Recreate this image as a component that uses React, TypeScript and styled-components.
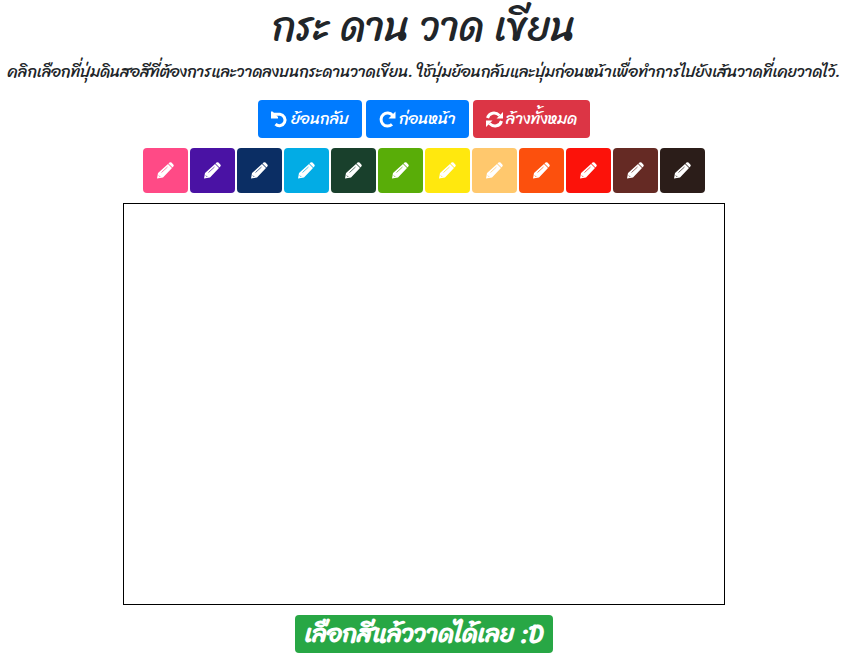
import React from 'react';
import styled, { createGlobalStyle } from 'styled-components';

const GlobalStyle = createGlobalStyle`
  *, *::before, *::after { box-sizing: border-box; }
  body {
    margin: 0;
    background: #fff;
    color: #212529;
    font-family: Sriracha, Itim, Roboto, "Open Sans", "Noto Sans", "DejaVu Sans", sans-serif;
    font-size: 16px;
    line-height: 24px;
  }
`;
const Page = styled.main`
  display: flex;
  flex-direction: column;
  align-items: center;
  padding: 3px 0 0 4px;
`;
const Title = styled.h1`
  margin: 0 0 5px;
  font-size: 40px;
  line-height: 48px;
  font-weight: 400;
`;
const Intro = styled.p`
  margin: 4px 0 16px;
  font-size: 16px;
  text-align: center;
`;
const Toolbar = styled.div`
  display: flex;
  flex-wrap: wrap;
  justify-content: center;
  gap: 4px;
`;
const Action = styled.button<{ $color: string }>`
  display: flex;
  align-items: center;
  gap: 3px;
  height: 38px;
  padding: 0 13px;
  border: 0;
  border-radius: 4px;
  background: ${p => p.$color};
  color: #fff;
  font: inherit;
`;
const Palette = styled.div`
  display: flex;
  flex-wrap: wrap;
  justify-content: center;
  gap: 2px;
  margin: 10px 0;
`;
const Swatch = styled.button<{ $color: string }>`
  display: grid;
  place-items: center;
  width: 45px;
  height: 45px;
  padding: 0;
  border: 0;
  border-radius: 4px;
  background: ${p => p.$color};
  color: #fff;
`;
const Board = styled.canvas`
  border: 1px solid #000;
`;
const Status = styled.strong`
  margin-top: 10px;
  padding: 0 10px;
  border-radius: 4px;
  background: #28a745;
  color: #fff;
  font-size: 25px;
  line-height: 38px;
`;
const Glyph = styled.svg`
  display: block;
  width: 17px;
  height: 17px;
  fill: none;
  stroke: currentColor;
  stroke-width: 3;
`;
const PencilLine = styled.path<{ $color: string }>`
  stroke: ${p => p.$color};
  stroke-width: 0.7;
`;

const UndoIcon = () => (
  <Glyph viewBox="0 0 17 17" aria-hidden="true">
    <path d="M2 3.300H9A5.700 5.700 0 1 1 4.500 13.200" />
    <path d="M0 .5H1.500L7 6V7.500H0Z" fill="currentColor" stroke="none" />
  </Glyph>
);
const RedoIcon = () => (
  <Glyph viewBox="0 0 17 17" aria-hidden="true">
    <path d="M13.500 4.300A6.500 6.500 0 1 0 13 13.300" />
    <path d="M16.500 .5V7.500H9.500Z" fill="currentColor" stroke="none" />
  </Glyph>
);
const RefreshIcon = () => (
  <Glyph viewBox="0 0 17 17" aria-hidden="true">
    <path d="M1.500 7C3 1.500 9.500 .5 13.500 4.500M15.500 10C14 15.500 7.500 16.500 3.500 12.500" />
    <path d="M17 1V7.500H10.500ZM0 16V9.500H6.500Z" fill="currentColor" stroke="none" />
  </Glyph>
);
const PencilIcon = ({ color }: { color: string }) => (
  <Glyph viewBox="0 0 17 17" aria-hidden="true">
    <path
      d="M0 16.500L1 11L11 2L15 6L6 15.500ZM11.500 1.500L12.500.5Q13.500-.2 14.500.6L16.300 2.400Q17.200 3.500 16.300 4.500L15.500 5.500Z"
      fill="currentColor"
      stroke="none"
    />
    <PencilLine $color={color} d="M4.500 10.500L10.500 5M1.800 13.500L3.300 15" />
  </Glyph>
);

const colors = [
  ['ชมพู', '#ff4a86'], ['ม่วง', '#4a12a4'], ['น้ำเงิน', '#0b2e64'], ['ฟ้า', '#02ace5'],
  ['เขียวเข้ม', '#19402c'], ['เขียว', '#59ad08'], ['เหลือง', '#ffe80e'], ['เนื้อ', '#ffc86d'],
  ['ส้ม', '#fc500d'], ['แดง', '#fc120a'], ['น้ำตาล', '#652a24'], ['ดำ', '#2b1d19'],
];

export default function App() {
  return (
    <>
      <GlobalStyle />
      <Page>
        <Title>กระ ดาน วาด เขียน</Title>
        <Intro>คลิกเลือกที่ปุ่มดินสอสีที่ต้องการและวาดลงบนกระดานวาดเขียน. ใช้ปุ่มย้อนกลับและปุ่มก่อนหน้าเพื่อทำการไปยังเส้นวาดที่เคยวาดไว้.</Intro>
        <Toolbar>
          <Action type="button" $color="#007bff"><UndoIcon />ย้อนกลับ</Action>
          <Action type="button" $color="#007bff"><RedoIcon />ก่อนหน้า</Action>
          <Action type="button" $color="#dc3545"><RefreshIcon />ล้างทั้งหมด</Action>
        </Toolbar>
        <Palette>
          {colors.map(([name, color]) => (
            <Swatch type="button" key={name} $color={color} aria-label={name}><PencilIcon color={color} /></Swatch>
          ))}
        </Palette>
        <Board width={600} height={400} />
        <Status>เลือกสีแล้ววาดได้เลย :D</Status>
      </Page>
    </>
  );
}
